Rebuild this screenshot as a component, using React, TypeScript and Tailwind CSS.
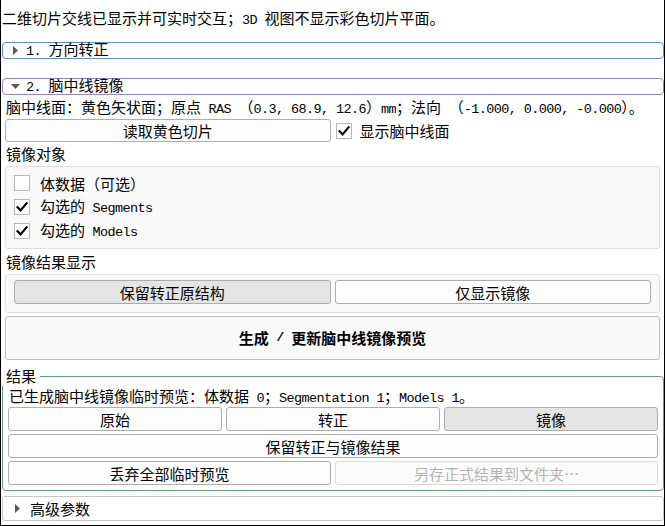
import { ReactNode } from "react";

const FONT = {
  fontFamily: '"Noto Sans Mono CJK SC", "Noto Sans CJK SC", "Liberation Mono", monospace',
};

// latin runs: half-width monospace next to the CJK glyphs
const Lt = ({ children }: { children: ReactNode }) => (
  <span className="font-['Liberation_Mono',monospace] text-[13.5px] tracking-[-0.6px]">{children}</span>
);

// small filled triangles used by the collapsible section headers
const Arrow = ({ down = false }: { down?: boolean }) =>
  down ? (
    <svg width="9" height="5" viewBox="0 0 9 5" className="shrink-0">
      <path d="M0 0 L9 0 L4.5 5 Z" fill="#5a5a5a" />
    </svg>
  ) : (
    <svg width="5" height="9" viewBox="0 0 5 9" className="shrink-0">
      <path d="M0 0 L5 4.5 L0 9 Z" fill="#5a5a5a" />
    </svg>
  );

const CheckBox = ({ checked }: { checked: boolean }) => (
  <span className="w-[16px] h-[16px] shrink-0 border border-[#b9b9b9] bg-white flex items-center justify-center">
    {checked && (
      <svg width="12" height="12" viewBox="0 0 12 12">
        <path
          d="M1.6 6.2 L4.6 9.4 L10.6 2.2"
          fill="none"
          stroke="#000"
          strokeWidth="2.2"
          strokeLinecap="square"
        />
      </svg>
    )}
  </span>
);

type BtnProps = {
  children: ReactNode;
  pressed?: boolean;
  disabled?: boolean;
  className?: string;
};

const Btn = ({ children, pressed, disabled, className = "" }: BtnProps) => (
  <button
    className={`flex items-center justify-center rounded-[3px] border text-[15px] leading-none ${
      disabled
        ? "border-[#d9d9d9] bg-[#fbfbfb] text-[#b4b4b4]"
        : pressed
        ? "border-[#adadad] bg-[#e5e5e5] text-black"
        : "border-[#adadad] bg-[#fdfdfd] text-black"
    } ${className}`}
  >
    {children}
  </button>
);

const SectionHeader = ({
  num,
  label,
  open,
  border,
  className = "",
}: {
  num?: string;
  label: string;
  open?: boolean;
  border: string;
  className?: string;
}) => (
  <div className={`flex items-center rounded-[4px] border pb-[2px] ${border} ${className}`}>
    <div className="w-[22px] flex justify-center pl-[2px] pt-[2px]">
      <Arrow down={open} />
    </div>
    <span className="pl-[1px] leading-none whitespace-pre">
      {num && <Lt>{num}</Lt>}
      {label}
    </span>
  </div>
);

export default function App() {
  return (
    <div
      className="w-[665px] h-[526px] bg-white text-black text-[15px] border-l border-r border-b border-black pl-[1px] overflow-hidden"
      style={FONT}
    >
      <div className="pt-[8px] h-[28px] leading-[20px] whitespace-pre">
        二维切片交线已显示并可实时交互；<Lt>3D </Lt>视图不显示彩色切片平面。
      </div>

      <SectionHeader num="1. " label="方向转正" border="border-[#5b8dc8]" className="mt-[14px] h-[17px]" />
      <SectionHeader num="2. " label="脑中线镜像" open border="border-[#9a84c6]" className="mt-[19px] h-[17px]" />

      <div className="mt-[2px] h-[20px] leading-[20px] pl-[4px] whitespace-pre">
        脑中线面：黄色矢状面；原点<Lt> RAS </Lt>（<Lt>0.3, 68.9, 12.6</Lt>）<Lt>mm</Lt>；法向<Lt> </Lt>（
        <Lt>-1.000, 0.000, -0.000</Lt>）。
      </div>

      <div className="mt-[2px] h-[23px] ml-[3px] mr-[3px] grid grid-cols-2 gap-[5px]">
        <Btn>读取黄色切片</Btn>
        <label className="flex items-center gap-[8px]">
          <CheckBox checked />
          <span className="leading-none">显示脑中线面</span>
        </label>
      </div>

      <div className="mt-[2px] h-[20px] leading-[20px] pl-[4px]">镜像对象</div>
      <div className="mt-[2px] h-[83px] ml-[3px] mr-[4px] rounded-[3px] border border-[#dedede] bg-[#f9f9f9] pt-[4px] pl-[8px]">
        {[
          { cjk: "体数据（可选）", latin: "", checked: false },
          { cjk: "勾选的", latin: " Segments", checked: true },
          { cjk: "勾选的", latin: " Models", checked: true },
        ].map((item, i) => (
          <div key={i} className="h-[24px] flex items-center gap-[10px]">
            <CheckBox checked={item.checked} />
            <span className="leading-none whitespace-pre">
              {item.cjk}
              {item.latin && <Lt>{item.latin}</Lt>}
            </span>
          </div>
        ))}
      </div>

      <div className="mt-[3px] h-[20px] leading-[20px] pl-[4px]">镜像结果显示</div>
      <div className="mt-[2px] h-[39px] ml-[3px] mr-[4px] rounded-[3px] border border-[#e0e0e0] bg-[#f9f9f9] pt-[5px] px-[8px] grid grid-cols-2 gap-[4px]">
        <Btn pressed className="h-[24px]">保留转正原结构</Btn>
        <Btn className="h-[24px]">仅显示镜像</Btn>
      </div>

      <button className="mt-[3px] h-[44px] ml-[3px] w-[655px] rounded-[3px] border border-[#bdbdbd] bg-[#fafafa] font-bold text-[15px] flex items-center justify-center whitespace-pre">
        生成<Lt> / </Lt>更新脑中线镜像预览
      </button>

      {/* result group box, title sits on the frame line */}
      <div className="relative mt-[16px] h-[115px] rounded-[4px] border border-[#62a27b] pt-[9px] px-[5px]">
        <span className="absolute -top-[11px] -left-[1px] h-[20px] leading-[20px] pl-[4px] pr-[4px] bg-white">
          结果
        </span>
        <div className="h-[20px] leading-[20px] pl-[1px] whitespace-pre">
          已生成脑中线镜像临时预览：体数据<Lt> 0</Lt>；<Lt>Segmentation 1</Lt>；<Lt>Models 1</Lt>。
        </div>
        <div className="mt-[1px] h-[24px] grid grid-cols-3 gap-[4px]">
          <Btn>原始</Btn>
          <Btn>转正</Btn>
          <Btn pressed>镜像</Btn>
        </div>
        <Btn className="mt-[3px] h-[24px] w-full">保留转正与镜像结果</Btn>
        <div className="mt-[3px] h-[24px] grid grid-cols-2 gap-[4px]">
          <Btn>丢弃全部临时预览</Btn>
          <Btn disabled>另存正式结果到文件夹…</Btn>
        </div>
      </div>

      <div className="mt-[5px] h-[25px] flex items-center rounded-[3px] border border-[#c6c6c6]">
        <div className="w-[27px] flex justify-center pl-[2px]">
          <Arrow />
        </div>
        <span className="leading-none">高级参数</span>
      </div>
    </div>
  );
}
